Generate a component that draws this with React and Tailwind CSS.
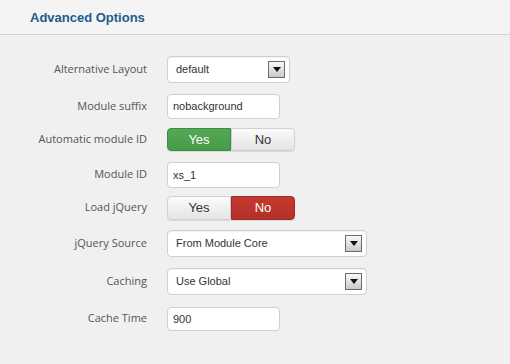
const Arrow = () => (
  <div className="w-[17px] h-[17px] border border-[#6b6b6b] bg-gradient-to-b from-[#fafafa] to-[#c9c9c9] flex items-center justify-center">
    <svg width="8" height="5" viewBox="0 0 8 5"><path d="M0 0h8L4 5z" fill="#111" /></svg>
  </div>
);

const Select = ({ value, w, h }) => (
  <div className={`${w} ${h} bg-white border border-[#cfcfcf] rounded-[4px] flex items-center justify-between pl-[8px] pr-[4px] text-[11px] text-[#333] font-['Liberation_Sans',sans-serif] shadow-[inset_0_1px_1px_rgba(0,0,0,0.05)]`}>
    <span>{value}</span>
    <Arrow />
  </div>
);

const Input = ({ value, h }) => (
  <div className={`w-[113px] ${h} bg-white border border-[#cfcfcf] rounded-[4px] flex items-center pl-[5px] text-[11px] text-[#333] font-['Liberation_Sans',sans-serif]`}>
    {value}
  </div>
);

const Toggle = ({ yes, h }) => (
  <div className={`flex ${h} w-[128px] text-[13px] font-['Liberation_Sans',sans-serif] rounded-[4px] shadow-[0_1px_1px_rgba(0,0,0,0.1)]`}>
    <div className={`flex-1 flex items-center justify-center rounded-l-[4px] border ${yes ? "bg-gradient-to-b from-[#55a855] to-[#479a47] border-[#3f8a3f] text-white" : "bg-gradient-to-b from-[#fbfbfb] to-[#e4e4e4] border-[#d0d0d0] text-[#333]"}`}>Yes</div>
    <div className={`flex-1 flex items-center justify-center rounded-r-[4px] border ${yes ? "bg-gradient-to-b from-[#fbfbfb] to-[#e4e4e4] border-[#d0d0d0] text-[#333]" : "bg-gradient-to-b from-[#c4392f] to-[#b2312a] border-[#a02b25] text-white"}`}>No</div>
  </div>
);

const Row = ({ label, mt, children }) => (
  <div className={`flex items-center ${mt}`}>
    <div className="w-[147px] text-right pb-[1px] text-[11px] text-[#555] font-['Open_Sans',sans-serif]">{label}</div>
    <div className="ml-[20px]">{children}</div>
  </div>
);

export default function App() {
  return (
    <div className="w-[510px] h-[364px] bg-[#f0f0f0] font-['Open_Sans',sans-serif]">
      <div className="h-[35px] bg-[#f4f4f4] border-b border-[#d2d2d2] pl-[30px] pt-[8px]">
        <h3 className="text-[13px] font-bold text-[#235a8c] font-['Liberation_Sans',sans-serif]">Advanced Options</h3>
      </div>
      <div className="pt-[21px]">
        <Row label="Alternative Layout">
          <Select value="default" w="w-[123px]" h="h-[27px]" />
        </Row>
        <Row label="Module suffix" mt="mt-[11px]">
          <Input value="nobackground" h="h-[25px]" />
        </Row>
        <Row label="Automatic module ID" mt="mt-[9px]">
          <Toggle yes h="h-[23px]" />
        </Row>
        <Row label="Module ID" mt="mt-[11px]">
          <Input value="xs_1" h="h-[26px]" />
        </Row>
        <Row label="Load jQuery" mt="mt-[8px]">
          <Toggle yes={false} h="h-[24px]" />
        </Row>
        <Row label="jQuery Source" mt="mt-[10px]">
          <Select value="From Module Core" w="w-[200px]" h="h-[27px]" />
        </Row>
        <Row label="Caching" mt="mt-[11px]">
          <Select value="Use Global" w="w-[200px]" h="h-[27px]" />
        </Row>
        <Row label="Cache Time" mt="mt-[12px]">
          <Input value="900" h="h-[24px]" />
        </Row>
      </div>
    </div>
  );
}
